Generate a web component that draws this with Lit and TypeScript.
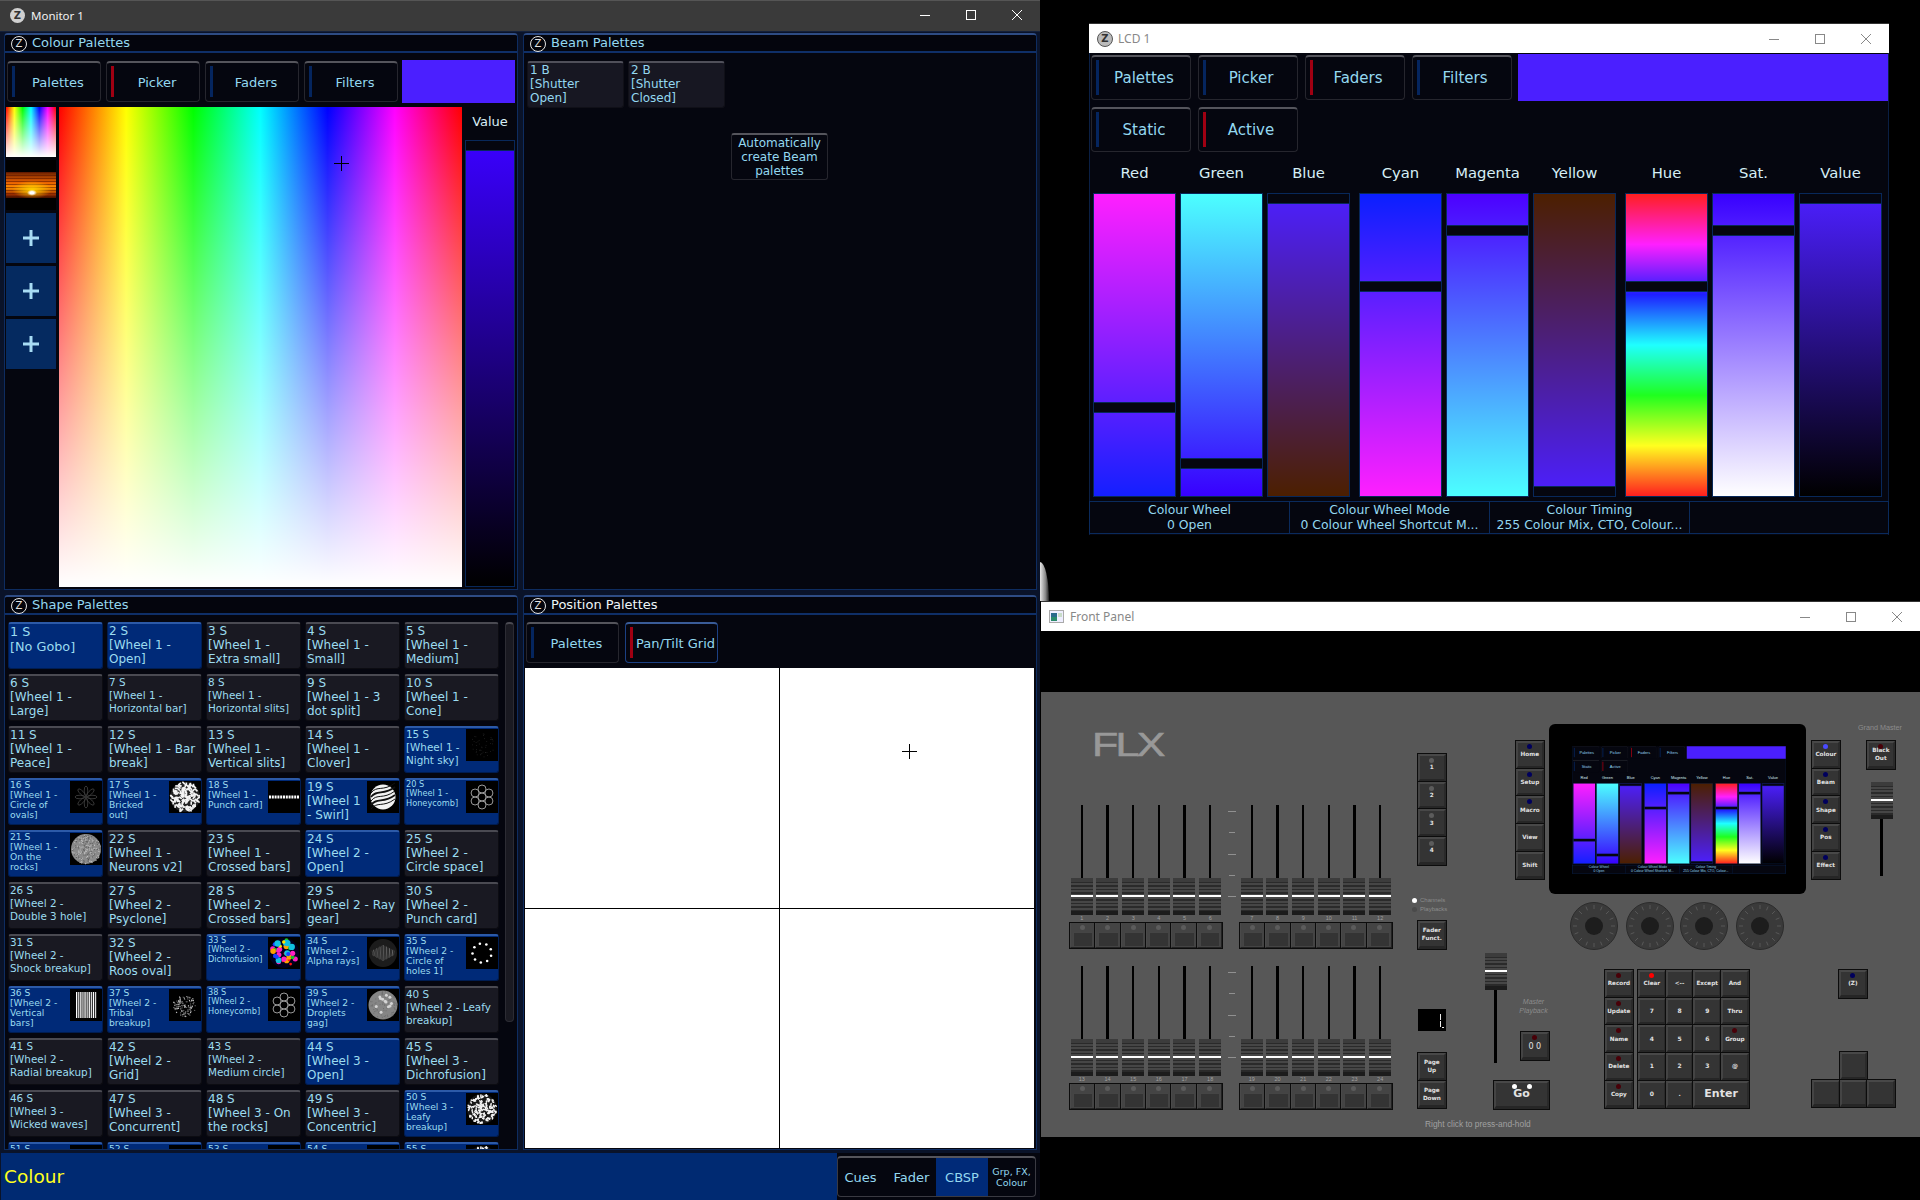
import { LitElement, html, svg, css } from "lit";

type Size = "s13" | "s12" | "s10" | "s9" | "s8";
interface Cell { t: string; s: Size; b?: boolean; g?: string }

const W1 = "[Wheel 1 -";
const W2 = "[Wheel 2 -";
const W3 = "[Wheel 3 -";
const cells: Cell[] = [
  { t: "1 S\n[No Gobo]", s: "s13", b: true },
  { t: `2 S\n${W1}\nOpen]`, s: "s12", b: true },
  { t: `3 S\n${W1}\nExtra small]`, s: "s12" },
  { t: `4 S\n${W1}\nSmall]`, s: "s12" },
  { t: `5 S\n${W1}\nMedium]`, s: "s12" },
  { t: `6 S\n${W1}\nLarge]`, s: "s12" },
  { t: `7 S\n${W1}\nHorizontal bar]`, s: "s10" },
  { t: `8 S\n${W1}\nHorizontal slits]`, s: "s10" },
  { t: "9 S\n[Wheel 1 - 3\ndot split]", s: "s12" },
  { t: `10 S\n${W1}\nCone]`, s: "s12" },
  { t: `11 S\n${W1}\nPeace]`, s: "s12" },
  { t: "12 S\n[Wheel 1 - Bar\nbreak]", s: "s12" },
  { t: `13 S\n${W1}\nVertical slits]`, s: "s12" },
  { t: `14 S\n${W1}\nClover]`, s: "s12" },
  { t: `15 S\n${W1}\nNight sky]`, s: "s10", b: true, g: "night" },
  { t: `16 S\n${W1}\nCircle of\novals]`, s: "s9", b: true, g: "star" },
  { t: `17 S\n${W1}\nBricked\nout]`, s: "s9", b: true, g: "brick" },
  { t: `18 S\n${W1}\nPunch card]`, s: "s9", b: true, g: "punch" },
  { t: "19 S\n[Wheel 1\n- Swirl]", s: "s12", b: true, g: "swirl" },
  { t: `20 S\n${W1}\nHoneycomb]`, s: "s8", b: true, g: "honey" },
  { t: `21 S\n${W1}\nOn the\nrocks]`, s: "s9", b: true, g: "rocks" },
  { t: `22 S\n${W1}\nNeurons v2]`, s: "s12" },
  { t: `23 S\n${W1}\nCrossed bars]`, s: "s12" },
  { t: `24 S\n${W2}\nOpen]`, s: "s12", b: true },
  { t: `25 S\n${W2}\nCircle space]`, s: "s12" },
  { t: `26 S\n${W2}\nDouble 3 hole]`, s: "s10" },
  { t: `27 S\n${W2}\nPsyclone]`, s: "s12" },
  { t: `28 S\n${W2}\nCrossed bars]`, s: "s12" },
  { t: "29 S\n[Wheel 2 - Ray\ngear]", s: "s12" },
  { t: `30 S\n${W2}\nPunch card]`, s: "s12" },
  { t: `31 S\n${W2}\nShock breakup]`, s: "s10" },
  { t: `32 S\n${W2}\nRoos oval]`, s: "s12" },
  { t: `33 S\n${W2}\nDichrofusion]`, s: "s8", b: true, g: "dichro" },
  { t: `34 S\n${W2}\nAlpha rays]`, s: "s9", b: true, g: "rays" },
  { t: `35 S\n${W2}\nCircle of\nholes 1]`, s: "s9", b: true, g: "holes" },
  { t: `36 S\n${W2}\nVertical\nbars]`, s: "s9", b: true, g: "bars" },
  { t: `37 S\n${W2}\nTribal\nbreakup]`, s: "s9", b: true, g: "tribal" },
  { t: `38 S\n${W2}\nHoneycomb]`, s: "s8", b: true, g: "honey" },
  { t: `39 S\n${W2}\nDroplets\ngag]`, s: "s9", b: true, g: "drops" },
  { t: "40 S\n[Wheel 2 - Leafy\nbreakup]", s: "s10" },
  { t: `41 S\n${W2}\nRadial breakup]`, s: "s10" },
  { t: `42 S\n${W2}\nGrid]`, s: "s12" },
  { t: `43 S\n${W2}\nMedium circle]`, s: "s10" },
  { t: `44 S\n${W3}\nOpen]`, s: "s12", b: true },
  { t: `45 S\n${W3}\nDichrofusion]`, s: "s12" },
  { t: `46 S\n${W3}\nWicked waves]`, s: "s10" },
  { t: `47 S\n${W3}\nConcurrent]`, s: "s12" },
  { t: "48 S\n[Wheel 3 - On\nthe rocks]", s: "s12" },
  { t: `49 S\n${W3}\nConcentric]`, s: "s12" },
  { t: `50 S\n${W3}\nLeafy\nbreakup]`, s: "s9", b: true, g: "leafy" },
  { t: `51 S\n${W3}`, s: "s9", b: true, g: "night" },
  { t: `52 S\n${W3}`, s: "s9", b: true, g: "tribal" },
  { t: `53 S\n${W3}`, s: "s9", b: true, g: "tribal" },
  { t: `54 S\n${W3}`, s: "s9", b: true, g: "night" },
  { t: `55 S\n${W3}`, s: "s9", b: true, g: "leafy" },
];

function rng(seed: number) {
  let s = seed;
  return () => {
    s = (s * 9301 + 49297) % 233280;
    return s / 233280;
  };
}
function scatter(seed: number, n: number, r: number) {
  const R = rng(seed);
  const out: { x: number; y: number; a: number; v: number }[] = [];
  for (let i = 0; i < n; i++) {
    const a = R() * Math.PI * 2;
    const d = Math.sqrt(R()) * r;
    out.push({ x: 16 + Math.cos(a) * d, y: 16 + Math.sin(a) * d, a: R() * 180, v: R() });
  }
  return out;
}
const ring = (n: number, r: number, off = 0) =>
  Array.from({ length: n }, (_, i) => {
    const a = off + (i / n) * Math.PI * 2;
    return { x: 16 + Math.cos(a) * r, y: 16 + Math.sin(a) * r, deg: (i / n) * 360 };
  });

function goboArt(kind: string) {
  switch (kind) {
    case "night":
      return scatter(3, 46, 12).map((p) => svg`<rect x=${p.x} y=${p.y} width=".8" height=".8" fill="#262626"/>`);
    case "star":
      return svg`${ring(8, 6, 0).map((p) => svg`<ellipse cx=${p.x} cy=${p.y} rx="1.8" ry="5" fill="none" stroke="#3c3c3c" stroke-width=".9" transform="rotate(${p.deg + 90} ${p.x} ${p.y})"/>`)}<circle cx="16" cy="16" r="2" fill="#333"/>`;
    case "brick":
      return svg`<circle cx="16" cy="16" r="15" fill="#222"/>${scatter(11, 130, 14.4).map((p) => svg`<rect x=${p.x - 1.7} y=${p.y - 0.8} width="3.4" height="1.6" fill="#f4f4f4" transform="rotate(${Math.round(p.v * 3) * 45} ${p.x} ${p.y})"/>`)}`;
    case "punch":
      return Array.from({ length: 11 }, (_, i) => svg`<rect x=${1 + i * 2.8} y="14.5" width="2" height="3" fill="#fff"/>`);
    case "swirl":
      return svg`<circle cx="16" cy="16" r="12.5" fill="#f2f2f2"/>${[8, 12, 16, 20, 24].map((y, i) => svg`<path d="M4 ${y + 4} C10 ${y - 4} 16 ${y + 3} 28 ${y - 6}" stroke="#111" stroke-width=${i % 2 ? 1.6 : 1} fill="none"/>`)}`;
    case "honey":
      return svg`<circle cx="16" cy="16" r="4" fill="none" stroke="#999" stroke-width="1"/>${ring(6, 8, Math.PI / 6).map((p) => svg`<circle cx=${p.x} cy=${p.y} r="4" fill="none" stroke="#999" stroke-width="1"/>`)}`;
    case "rocks":
      return svg`<circle cx="16" cy="16" r="15" fill="#8a8a8a"/>${scatter(5, 220, 14.6).map((p) => svg`<rect x=${p.x} y=${p.y} width="1" height="1" fill=${p.v > 0.5 ? "#c4c4c4" : "#5c5c5c"}/>`)}`;
    case "dichro": {
      const cols = ["#ff1010", "#ffe000", "#18c020", "#1840ff", "#ff20c0", "#ffa000", "#10c0e0"];
      return svg`<circle cx="16" cy="16" r="15" fill="#000020"/>${scatter(9, 34, 13).map((p) => svg`<circle cx=${p.x} cy=${p.y} r=${1.2 + p.v * 2} fill=${cols[Math.floor(p.v * 7)]}/>`)}`;
    }
    case "rays":
      return svg`<circle cx="16" cy="16" r="14" fill="#1c1c1c"/>${Array.from({ length: 15 }, (_, i) => svg`<path d="M${5 + i * 1.6} ${8 + Math.abs(7 - i) * 0.8} Q${6 + i * 1.5} 16 ${5.5 + i * 1.5} ${24 - Math.abs(7 - i) * 0.8}" stroke=${i % 2 ? "#777" : "#444"} stroke-width=".8" fill="none"/>`)}`;
    case "holes":
      return ring(9, 9.5, 0.3).map((p) => svg`<circle cx=${p.x} cy=${p.y} r="1.3" fill="#fff"/>`);
    case "bars":
      return Array.from({ length: 10 }, (_, i) => svg`<rect x=${6 + i * 2.1} y="3" width="1.3" height="26" fill=${i % 2 ? "#d8d8d8" : "#fff"}/>`);
    case "tribal":
      return scatter(7, 120, 11).map((p) => svg`<rect x=${p.x} y=${p.y} width="1.3" height="1" fill=${p.v > 0.6 ? "#ccc" : "#666"} transform="rotate(${p.a} ${p.x} ${p.y})"/>`);
    case "drops":
      return svg`<circle cx="16" cy="16" r="14.5" fill="#858585"/>${scatter(13, 80, 14).map((p) => svg`<rect x=${p.x} y=${p.y} width="1" height="1" fill="#6e6e6e"/>`)}${scatter(21, 12, 11).map((p) => svg`<circle cx=${p.x} cy=${p.y} r="1.5" fill="#d4d4d4"/>`)}`;
    case "leafy":
      return svg`<circle cx="16" cy="16" r="15" fill="#181818"/>${scatter(17, 150, 14.4).map((p) => svg`<ellipse cx=${p.x} cy=${p.y} rx="1.4" ry=".8" fill="#f4f4f4" transform="rotate(${p.a} ${p.x} ${p.y})"/>`)}`;
  }
  return svg``;
}
const gobo = (kind: string) => html`<svg class="thumb" viewBox="0 0 32 32" width="32" height="32">${goboArt(kind)}</svg>`;

const winControls = (stroke: string) => html`<div class="ctrls">
  <div class="ctrl"><svg viewBox="0 0 12 12" width="12" height="12"><path d="M1 6.5h10" stroke=${stroke}/></svg></div>
  <div class="ctrl"><svg viewBox="0 0 12 12" width="12" height="12"><rect x="1.5" y="1.5" width="9" height="9" fill="none" stroke=${stroke}/></svg></div>
  <div class="ctrl"><svg viewBox="0 0 12 12" width="12" height="12"><path d="M1 1l10 10M11 1L1 11" stroke=${stroke}/></svg></div>
</div>`;

const cross = (cls: string) => html`<svg class="cross ${cls}" viewBox="0 0 15 15" width="15" height="15"><path d="M7.5 0v15M0 7.5h15" stroke="#000" stroke-width="1"/></svg>`;
const zring = html`<span class="zring">Z</span>`;
const tab = (label: string, red = false, extra = "") =>
  html`<div class="tab ${extra}"><i class="bar ${red ? "red" : ""}"></i><span>${label}</span></div>`;

const p = (x: number, y: number) => `left:${x - 1041}px;top:${y - 692}px`;

interface LedOpt { led?: string; cls?: string }
const key = (label: string, o: LedOpt = {}) =>
  html`<div class="key ${o.cls ?? ""}">${o.led ? html`<i class="led ${o.led}"></i>` : ""}<span>${label}</span></div>`;

const bigFader = (cls = "") => html`<div class="cap ${cls}"></div>`;

const bank = (x: number, y: number, first: number) => html`<div class="place bank" style=${p(x, y)}>
  <div class="bank-faders">
    ${[0, 1, 2, 3, 4, 5].map(
      (i) => html`<div class="strip"><div class="track"></div>${bigFader()}<div class="num">${first + i}</div></div>`
    )}
  </div>
  <div class="keys bank-keys">${[0, 1, 2, 3, 4, 5].map(() => key("", { led: "grey", cls: "fkey" }))}</div>
</div>`;

const ticks = (x: number, y: number) => html`<div class="place ticks" style=${p(x, y)}>
  <i></i><i class="short"></i><i></i><i class="short"></i><i></i>
</div>`;

const encoder = (cx: number) => html`<svg class="place" style=${p(cx - 24, 902)} viewBox="0 0 48 48" width="48" height="48">
  <circle cx="24" cy="24" r="23.5" fill="#3a3a3a" stroke="#2c2c2c"/>
  ${Array.from({ length: 16 }, (_, i) => {
    const a = (i / 16) * Math.PI * 2;
    return svg`<path d="M${24 + Math.cos(a) * 17} ${24 + Math.sin(a) * 17}L${24 + Math.cos(a) * 21} ${24 + Math.sin(a) * 21}" stroke="#666" stroke-width=".7"/>`;
  })}
  <circle cx="24" cy="24" r="9" fill="#1d1d1d"/>
</svg>`;

interface FaderDef { label: string; grad: string; h: number }
const lcdGroups: FaderDef[][] = [
  [
    { label: "Red", grad: "#ff1fff,#141fff", h: 209 },
    { label: "Green", grad: "#4cffff,#3800ff", h: 265 },
    { label: "Blue", grad: "#4c1fff,#4c1f00", h: 0 },
  ],
  [
    { label: "Cyan", grad: "#0a1fff,#ff1fff", h: 88 },
    { label: "Magenta", grad: "#4c00ff,#4cffff", h: 32 },
    { label: "Yellow", grad: "#4c1f00,#4c1fff", h: 293 },
  ],
  [
    { label: "Hue", grad: "#ff1f1f,#ff1fff,#1f1fff,#1fffff,#1fff1f,#ffff1f,#ff1f1f", h: 88 },
    { label: "Sat.", grad: "#3800ff,#ffffff", h: 32 },
    { label: "Value", grad: "#4c1fff,#000000", h: 0 },
  ],
];

const fader = (grad: string, top: number) =>
  html`<div class="fader" style="background:linear-gradient(${grad})"><i class="handle" style="top:${top}px"></i></div>`;

const lcdBody = () => html`<div class="lcd-body">
  <div class="lcd-row">
    ${tab("Palettes", false, "big")}${tab("Picker", false, "big")}${tab("Faders", true, "big")}${tab("Filters", false, "big")}
    <div class="lcd-swatch"></div>
  </div>
  <div class="lcd-row two">${tab("Static", false, "big")}${tab("Active", true, "big")}</div>
  <div class="lcd-faders">
    ${lcdGroups.map(
      (g) => html`<div class="lcd-group">
        ${g.map((f) => html`<div class="lcd-col"><div class="lcd-label">${f.label}</div>${fader(f.grad, f.h)}</div>`)}
      </div>`
    )}
  </div>
  <div class="lcd-table">
    <div>Colour Wheel<br />0 Open</div>
    <div>Colour Wheel Mode<br />0 Colour Wheel Shortcut M...</div>
    <div>Colour Timing<br />255 Colour Mix, CTO, Colour...</div>
    <div></div>
  </div>
</div>`;

class AppRoot extends LitElement {
  static styles = css`
    :host {
      display: block;
      position: relative;
      width: 1920px;
      height: 1200px;
      background: #000;
      overflow: hidden;
      font-family: "DejaVu Sans", sans-serif;
      color: #94d8f0;
    }
    * { box-sizing: border-box; }
    .win { position: absolute; display: flex; flex-direction: column; overflow: hidden; }
    .monitor { left: 0; top: 0; width: 1040px; height: 1200px; background: #0a1329; }
    .lcd { left: 1089px; top: 23px; width: 800px; height: 512px; background: #05060f; }
    .front { left: 1041px; top: 601px; width: 879px; height: 599px; background: #000; }
    .sliver {
      position: absolute; left: 1040px; top: 562px; width: 9px; height: 39px;
      background: linear-gradient(90deg, #e6e6e6, #8a8a8a 60%, #222);
      border-radius: 0 100% 0 0;
    }
    .titlebar {
      flex: none; height: 30px; display: flex; align-items: center;
      font-family: "Noto Sans", sans-serif; font-size: 12px;
      background: #fff; color: #888; border-top: 1px solid #333;
    }
    .titlebar.dark { height: 32px; background: #3a3a3a; color: #f2f2f2; border-top: 1px solid #555; border-bottom: 1px solid #14203a; padding: 0 0 2px 10px; font-size: 11.5px; }
    .titlebar.light { padding-left: 8px; }
    .titlebar .name { flex: 1; }
    .ico {
      width: 15px; height: 15px; border-radius: 50%; background: #d0d0d0; color: #333; margin-right: 6px;
      display: flex; align-items: center; justify-content: center;
      font: bold 10px "DejaVu Sans", sans-serif;
    }
    .light .ico { background: #bbb; width: 16px; height: 16px; border: 1px solid #555; margin-right: 5px; }
    .app-ico { margin-right: 6px; }
    .ctrls { display: flex; }
    .ctrl { width: 46px; height: 28px; display: flex; align-items: center; justify-content: center; }

    .body {
      flex: none; display: grid; grid-template-columns: 514px 514px; grid-template-rows: 557px 555px;
      column-gap: 5px; row-gap: 5px; padding: 1px 3px 0 4px;
    }
    .panel {
      display: flex; flex-direction: column; overflow: hidden; background: #05060f;
      border: 1px solid #0e2c60; border-top: 2px solid #2e4c84; border-radius: 4px 4px 0 0;
    }
    .ptitle {
      flex: none; height: 18px; display: flex; align-items: center; gap: 5px; padding: 0 0 2px 6px;
      background: #04050d; border-bottom: 2px solid #0f2f68; font-size: 13px; color: #94d8f0;
    }
    .ptitle.focus { color: #eef6f8; }
    .zring {
      width: 16px; height: 16px; border-radius: 50%; border: 1px solid #e4e4e4; color: #e4e4e4;
      display: flex; align-items: center; justify-content: center; font-size: 10px; margin-top: 3px; flex: none;
    }

    .tabs { flex: none; display: flex; gap: 5px; padding: 7px 0 0 2px; height: 50px; }
    .tab {
      position: relative; width: 94px; height: 41px; margin-top: 1px; padding-left: 8px;
      display: flex; align-items: center; justify-content: center;
      font-size: 13px; background: #05060f; white-space: nowrap;
      border: 1px solid #26262e; border-top: 2px solid #55555c; border-radius: 4px;
    }
    .tab.big { width: 100px; height: 45px; font-size: 15px; padding-left: 6px; }
    .tab.sel { border-color: #1b4084; border-top-color: #3a5c98; }
    .bar { position: absolute; left: 4px; top: 3px; bottom: 4px; width: 3px; background: #05255e; }
    .bar.red { background: #a00012; }
    .swatch { width: 113px; height: 43px; margin-left: -1px; background: #4b1fff; }

    .picker-row { flex: 1; min-height: 0; display: flex; gap: 3px; padding: 4px 1px 2px; }
    .strip-col { width: 50px; display: flex; flex-direction: column; gap: 3px; }
    .thumb-tile { flex: none; width: 50px; height: 50px; }
    .rainbow, .picker {
      background: linear-gradient(to bottom, rgba(255,255,255,0), #fff),
        linear-gradient(to right, #f00, #ff0, #0f0, #0ff, #00f, #f0f, #f00);
    }
    .sunset-wrap { background: #000; display: flex; align-items: center; }
    .sunset {
      width: 100%; height: 26px;
      background: radial-gradient(ellipse 5px 3px at 52% 80%, #fff 40%, transparent),
        radial-gradient(ellipse 20px 9px at 52% 68%, #ffd000, transparent),
        repeating-linear-gradient(rgba(90,20,0,.55) 0 1px, transparent 1px 3px),
        linear-gradient(#6a2000, #e86000 40%, #ff9000 60%, #a03000 85%, #401000);
    }
    .plus { background: #052a60; display: flex; align-items: center; justify-content: center; }
    .picker { position: relative; width: 403px; }
    .cross { position: absolute; }
    .cross.a { left: 275px; top: 49px; }
    .cross.b { left: 377px; top: 76px; }
    .value-col { width: 50px; display: flex; flex-direction: column; }
    .value-label { flex: none; height: 33px; padding-bottom: 4px; display: flex; align-items: center; justify-content: center; font-size: 13px; color: #d8eef6; }
    .value-col .fader { flex: 1; }

    .fader { position: relative; border: 1px solid #08285a; width: 100%; }
    .handle { position: absolute; left: 0; right: 0; height: 9px; background: #05060f; outline: 1px solid #08285a; }

    .beam { padding: 7px 0 0 3px; }
    .beam-row { display: flex; gap: 4px; margin-top: 1px; }
    .beam-row.auto { margin-top: 25px; margin-left: 204px; }
    .pal {
      width: 97px; height: 47px; padding: 0 0 0 2px; font-size: 12px; line-height: 14px; white-space: pre;
      background: #171722; border: 1px solid #101018; border-top: 2px solid #50505a; border-radius: 3px;
    }
    .pal.act { background: #05060f; text-align: center; white-space: normal; padding: 1px 3px; border-color: #26262e; border-top-color: #55555c; }

    .shape { flex: 1; min-height: 0; display: flex; padding: 7px 0 0 3px; overflow: hidden; }
    .grid { display: grid; grid-template-columns: repeat(5, 95px); grid-auto-rows: 47px; gap: 5px 4px; flex: none; align-content: start; }
    .cell {
      display: flex; justify-content: space-between; overflow: hidden; position: relative;
      background: #191922; border: 1px solid #0c0c12; border-top: 2px solid #4a4a52; border-radius: 3px;
      white-space: pre; padding-left: 1px;
    }
    .cell.blue { background: #002a78; border-color: #001d52; border-top-color: #2c5aa8; }
    .cell .lbl { color: #9cdcf0; position: relative; }
    .s13 { font-size: 12.8px; line-height: 15px; }
    .s12 { font-size: 12px; line-height: 14px; }
    .s10 { font-size: 10.4px; line-height: 13px; }
    .s9 { font-size: 9.2px; line-height: 10px; }
    .s8 { font-size: 8.2px; line-height: 9.3px; }
    .thumb { flex: none; background: #000; margin: 1px 0 0 0; position: absolute; right: 0; top: 0; }
    .scrollbar {
      flex: none; width: 9px; height: 400px; margin-left: 6px;
      background: #1a1a22; border: 1px solid #2c2c34; border-top: 2px solid #4a4a52; border-radius: 4px;
    }

    .pos-tabs { flex: none; display: flex; gap: 6px; padding: 6px 0 0 2px; height: 53px; }
    .pos-tabs .tab { width: 93px; }
    .pan {
      position: relative; flex: 1; margin: 0 2px 1px 1px; background: #fff;
    }
    .pan::before { content: ""; position: absolute; left: 254px; top: 0; bottom: 0; width: 1px; background: #000; }
    .pan::after { content: ""; position: absolute; top: 240px; left: 0; right: 0; height: 1px; background: #000; }

    .footer { flex: 1; display: flex; align-items: stretch; margin-top: 3px; padding-left: 1px; }
    .mode {
      flex: 1; background: #002a72; color: #ffff1e; font-size: 18.5px; display: flex; align-items: center; padding: 0 0 0 3px;
    }
    .views {
      flex: none; width: 203px; background: #05060f; padding: 3px 4px 3px 0;
    }
    .views-in {
      height: 100%; display: grid; grid-template-columns: 49px 49px 52px 47px;
      border: 1px solid #3a3a42; border-top: 2px solid #55555c; border-radius: 4px; font-size: 13px; overflow: hidden;
    }
    .views-in div { display: flex; align-items: center; justify-content: center; text-align: center; }
    .views-in div:first-child { padding-right: 4px; }
    .views-in .on { background: #002a78; }
    .views-in .sm { font-size: 9.5px; line-height: 11px; white-space: nowrap; }

    .lcd-body { width: 800px; height: 482px; background: #05060f; display: flex; flex-direction: column; flex: none; border-left: 1px solid #0a1f44; border-right: 1px solid #0a1f44; }
    .lcd-row { display: flex; gap: 7px; padding: 1px 0 0 1px; height: 48px; flex: none; }
    .lcd-row.two { height: 45px; margin-top: 6px; padding-top: 0; }
    .lcd-row.two .tab { margin-top: 0; }
    .lcd-swatch { flex: 1; margin-left: -1px; background: #4b1fff; }
    .lcd-faders { flex: none; display: flex; gap: 9px; padding-left: 3px; height: 345px; }
    .lcd-group { display: flex; gap: 4px; }
    .lcd-col { width: 83px; display: flex; flex-direction: column; }
    .lcd-label { flex: none; height: 41px; display: flex; align-items: center; justify-content: center; font-size: 14.8px; color: #d6eef6; }
    .lcd-col .fader { flex: 1; }
    .lcd-table {
      flex: none; margin-top: 4px; margin-left: -1px; height: 33px; width: 800px; display: grid; grid-template-columns: repeat(4, 200px);
      border: 1px solid #0a2a5c; font-size: 12.4px; line-height: 15px; text-align: center;
    }
    .lcd-table div { border-right: 1px solid #0a2a5c; white-space: nowrap; overflow: hidden; }
    .lcd-table div:last-child { border-right: 0; }

    .spacer { flex: none; height: 61px; background: #000; }
    .face { flex: none; position: relative; height: 445px; background: #575757; font-family: "Liberation Sans", sans-serif; overflow: hidden; }
    .place { position: absolute; }
    .logo {
      font: normal 33px/24px "Liberation Sans", sans-serif; color: #989898; letter-spacing: -2px;
      transform: scaleX(1.3); transform-origin: 0 0; -webkit-text-stroke: .6px #989898;
    }
    .bank { width: 154px; }
    .bank-faders { display: grid; grid-template-columns: repeat(6, 1fr); }
    .strip { display: flex; flex-direction: column; align-items: center; }
    .track { width: 2.4px; height: 73px; background: #000; }
    .cap {
      position: relative; flex: none; width: 22px; height: 37px;
      background: linear-gradient(#3c3c3c 0 4px, transparent 4px), repeating-linear-gradient(#2a2a2a 0 1.5px, #464646 1.5px 3.5px);
    }
    .cap::before { content: ""; position: absolute; left: 0; right: 0; bottom: 0; height: 4px; background: #1c1c1c; }
    .cap::after { content: ""; position: absolute; left: 0; right: 0; top: 17px; height: 1.6px; background: #fff; }
    .num { font-size: 5.5px; line-height: 7px; height: 7px; color: #a0a0a0; }
    .keys { background: #0c0c0c; display: grid; }
    .bank-keys { grid-template-columns: repeat(6, 1fr); height: 27px; padding: 1px; }
    .key {
      position: relative; width: 27.7px; height: 27.7px; display: flex; align-items: center; justify-content: center;
      text-align: center; background: #343434; color: #e2e2e2;
      border-style: solid; border-width: 2px 2px 3px 2px; border-color: #484848 #2a2a2a #262626 #444;
      font: bold 5.7px/8px "DejaVu Sans", sans-serif;
      outline: .5px solid #0c0c0c; white-space: pre-line;
    }
    .key.fkey { width: auto; height: 25px; background: #444; border-width: 0 1px 1px 1px; border-color: #4a4a4a #222 #222 #4a4a4a; }
    .key.fkey::after { content: ""; position: absolute; left: 2px; right: 2px; top: 9px; bottom: 1px; background: #343434; border-left: 1px solid #454545; border-top: 1px solid #454545; }
    .key.wide { width: 55.4px; grid-column: span 2; font-size: 11px; }
    .key.go { width: 55px; font-size: 11px; }
    .key.num-k { font-size: 6px; }
    .key.pause { font: normal 8px/8px "DejaVu Sans", sans-serif; padding-top: 3px; }
    .led { position: absolute; top: 1px; left: 50%; width: 5px; height: 5px; margin-left: -2.5px; border-radius: 50%; z-index: 1; }
    .led.grey { background: #5c5c5c; top: 2px; }
    .led.blue { background: #00005c; }
    .led.bright { background: #4a4aff; }
    .led.dred { background: #480008; }
    .led.red { background: #ff0000; }
    .led.g1, .led.g2 { background: #fff; }
    .led.g1 { margin-left: -10px; }
    .led.g2 { margin-left: 5px; }
    .col { display: flex; flex-direction: column; }
    .ticks { width: 8px; height: 86px; display: flex; flex-direction: column; justify-content: space-between; align-items: center; }
    .ticks i { display: block; width: 8px; height: 1px; background: #909090; }
    .ticks i.short { width: 6px; }
    .small { font-size: 7.2px; line-height: 9.5px; color: #8c8c8c; white-space: nowrap; }
    .small.tiny { font-size: 6px; line-height: 9px; }
    .small i { display: inline-block; width: 5px; height: 5px; border-radius: 50%; background: #fff; margin-right: 3px; vertical-align: -.5px; }
    .small i.off { background: #4a4a4a; }
    .digit { width: 28px; height: 22px; background: #000; display: flex; flex-direction: column; align-items: flex-end; gap: 1px; padding: 5px 5px 0 0; }
    .digit i { width: 1px; height: 6px; background: #eee; flex: none; }
    .digit i.dot { height: 1.5px; width: 1.5px; margin-right: -2.5px; margin-top: -1.5px; }
    .screen { width: 257px; height: 170px; background: #000; border-radius: 6px; padding: 22px 21px 20px 23px; }
    .mini { width: 214px; height: 128px; overflow: hidden; }
    .mini-in { transform: scale(.2675, .2656); transform-origin: 0 0; width: 800px; }
    .gm { width: 23px; display: flex; flex-direction: column; align-items: center; }
    .gm .track { height: 58px; }
    .gm .track.long { height: 73px; }
    .italic { font-style: italic; text-align: center; font-size: 7px; line-height: 9px; color: #8c8c8c; width: 29px; }
    .hint { font-size: 8.4px; color: #a0a0a0; white-space: nowrap; line-height: 12px; }
    .keypad { grid-template-columns: repeat(4, 27.7px); padding: 0; background: #0c0c0c; }
    .arrows { display: grid; grid-template-columns: repeat(3, 27.7px); grid-template-rows: 27.7px 27.7px; background: none; }
    .arrows .top { grid-column: 2; }
    .arrows .start { grid-column: 1; }
  `;

  private monitor() {
    return html`<div class="win monitor">
      <div class="titlebar dark"><span class="ico">Z</span><span class="name">Monitor 1</span>${winControls("#fff")}</div>
      <div class="body">
        <section class="panel">
          <div class="ptitle">${zring}<span>Colour Palettes</span></div>
          <div class="tabs">
            ${tab("Palettes")}${tab("Picker", true)}${tab("Faders")}${tab("Filters")}
            <div class="swatch"></div>
          </div>
          <div class="picker-row">
            <div class="strip-col">
              <div class="thumb-tile rainbow"></div>
              <div class="thumb-tile sunset-wrap"><div class="sunset"></div></div>
              ${[0, 1, 2].map(
                () => html`<div class="thumb-tile plus"><svg viewBox="0 0 18 18" width="18" height="18"><path d="M9 1v16M1 9h16" stroke="#a8dcf4" stroke-width="3"/></svg></div>`
              )}
            </div>
            <div class="picker">${cross("a")}</div>
            <div class="value-col">
              <div class="value-label">Value</div>
              ${fader("#3a00ff,#000000", 0)}
            </div>
          </div>
        </section>
        <section class="panel">
          <div class="ptitle">${zring}<span>Beam Palettes</span></div>
          <div class="beam">
            <div class="beam-row">
              <div class="pal">1 B\n[Shutter\nOpen]</div>
              <div class="pal">2 B\n[Shutter\nClosed]</div>
            </div>
            <div class="beam-row auto"><div class="pal act">Automatically create Beam palettes</div></div>
          </div>
        </section>
        <section class="panel">
          <div class="ptitle">${zring}<span>Shape Palettes</span></div>
          <div class="shape">
            <div class="grid">
              ${cells.map(
                (c) => html`<div class="cell ${c.b ? "blue" : ""}"><span class="lbl ${c.s}">${c.t}</span>${c.g ? gobo(c.g) : ""}</div>`
              )}
            </div>
            <div class="scrollbar"></div>
          </div>
        </section>
        <section class="panel">
          <div class="ptitle focus">${zring}<span>Position Palettes</span></div>
          <div class="pos-tabs">${tab("Palettes")}${tab("Pan/Tilt Grid", true, "sel")}</div>
          <div class="pan">${cross("b")}</div>
        </section>
      </div>
      <div class="footer">
        <div class="mode">Colour</div>
        <div class="views">
          <div class="views-in">
            <div>Cues</div><div>Fader</div><div class="on">CBSP</div><div class="sm">Grp, FX,<br />Colour</div>
          </div>
        </div>
      </div>
    </div>`;
  }

  private lcd() {
    return html`<div class="win lcd">
      <div class="titlebar light"><span class="ico">Z</span><span class="name">LCD 1</span>${winControls("#888")}</div>
      ${lcdBody()}
    </div>`;
  }

  private front() {
    const lcol = (x: number, y: number, labels: [string, string?][]) => html`<div class="place col keys" style=${p(x, y)}>
      ${labels.map(([l, led]) => key(l, { led }))}
    </div>`;
    return html`<div class="win front">
      <div class="titlebar light">
        <svg class="app-ico" viewBox="0 0 15 13" width="15" height="13">
          <rect x=".5" y=".5" width="14" height="12" fill="#eef" stroke="#aaa"/>
          <rect x="2" y="3" width="6" height="8" fill="#2a6a8a"/>
          <rect x="9" y="3" width="4" height="4" fill="#c8dcc8"/>
          <rect x="2" y="7" width="6" height="4" fill="#2a8a6a"/>
        </svg>
        <span class="name">Front Panel</span>${winControls("#888")}
      </div>
      <div class="spacer"></div>
      <div class="face">
        <div class="place logo" style=${p(1092, 733)}>FLX</div>
        ${bank(1069, 805, 1)}${bank(1239, 805, 7)}${bank(1069, 966, 13)}${bank(1239, 966, 19)}
        ${ticks(1228, 811)}${ticks(1228, 972)}
        ${lcol(1418, 754, [["1", "grey"], ["2", "grey"], ["3", "grey"], ["4", "grey"]])}
        <div class="place small tiny" style=${p(1412, 896)}><i></i>Channels<br /><i class="off"></i>Playbacks</div>
        ${lcol(1418, 921, [["Fader\nFunct."]])}
        <div class="place digit" style=${p(1418, 1009)}><i></i><i></i><i class="dot"></i></div>
        ${lcol(1418, 1053, [["Page\nUp"], ["Page\nDown"]])}
        ${lcol(1516, 741, [["Home", "blue"], ["Setup", "blue"], ["Macro", "blue"], ["View"], ["Shift"]])}
        <div class="place screen" style=${p(1549, 724)}><div class="mini"><div class="mini-in">${lcdBody()}</div></div></div>
        ${lcol(1812, 741, [["Colour", "bright"], ["Beam", "blue"], ["Shape", "blue"], ["Pos", "blue"], ["Effect", "blue"]])}
        <div class="place small" style=${p(1858, 723)}>Grand Master</div>
        ${lcol(1867, 741, [["Black\nOut", "dred"]])}
        <div class="place gm" style=${p(1870, 782)}>${bigFader()}<div class="track long" style="height:57px"></div></div>
        ${encoder(1594)}${encoder(1650)}${encoder(1704)}${encoder(1760)}
        <div class="place gm" style=${p(1484, 953)}>${bigFader()}<div class="track long"></div></div>
        <div class="place small italic" style=${p(1519, 997)}>Master<br />Playback</div>
        <div class="place col keys" style=${p(1521, 1032)}>${key("0 0", { led: "dred", cls: "pause" })}</div>
        <div class="place col keys" style=${p(1494, 1081)}>
          <div class="key go"><i class="led g1"></i><i class="led g2"></i><span>Go</span></div>
        </div>
        ${lcol(1605, 970, [["Record", "dred"], ["Update", "dred"], ["Name", "dred"], ["Delete", "dred"], ["Copy", "dred"]])}
        <div class="place keys keypad" style=${p(1638, 970)}>
          ${key("Clear", { led: "red" })}${key("<--")}${key("Except")}${key("And")}
          ${key("7", { cls: "num-k" })}${key("8", { cls: "num-k" })}${key("9", { cls: "num-k" })}${key("Thru")}
          ${key("4", { cls: "num-k" })}${key("5", { cls: "num-k" })}${key("6", { cls: "num-k" })}${key("Group", { led: "dred" })}
          ${key("1", { cls: "num-k" })}${key("2", { cls: "num-k" })}${key("3", { cls: "num-k" })}${key("@", { cls: "num-k" })}
          ${key("0", { cls: "num-k" })}${key(".", { cls: "num-k" })}${key("Enter", { cls: "wide" })}
        </div>
        ${lcol(1839, 970, [["(Z)", "blue"]])}
        <div class="place arrows keys" style=${p(1812, 1052)}>
          ${key("", { cls: "top" })}${key("", { cls: "start" })}${key("")}${key("")}
        </div>
        <div class="place hint" style=${p(1425, 1118)}>Right click to press-and-hold</div>
      </div>
    </div>`;
  }

  render() {
    return html`<div class="sliver"></div>${this.monitor()}${this.lcd()}${this.front()}`;
  }
}
customElements.define("app-root", AppRoot);
